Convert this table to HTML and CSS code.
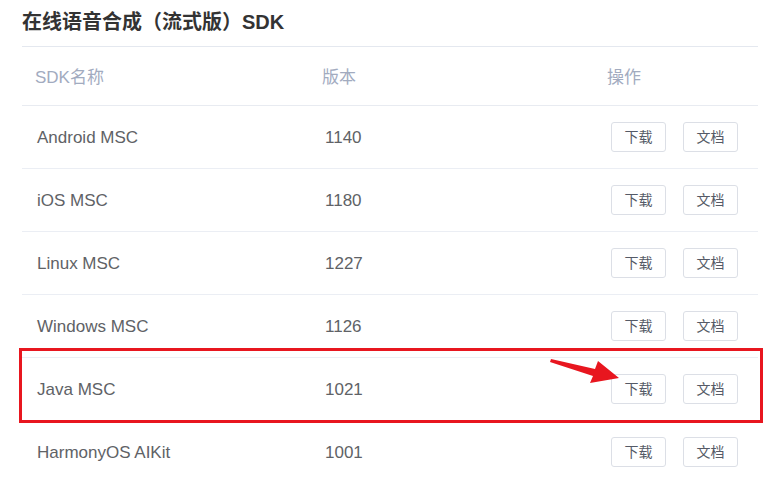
FILE: index.html
```html
<!DOCTYPE html>
<html lang="zh">
<head>
<meta charset="utf-8">
<title>在线语音合成（流式版）SDK</title>
<link rel="stylesheet" href="styles.css">
</head>
<body>
<div class="page">
  <h2 class="title">在线语音合成（流式版）SDK</h2>
  <div class="table">
    <div class="row head">
      <div class="cell c1">SDK名称</div>
      <div class="cell c2">版本</div>
      <div class="cell c3">操作</div>
    </div>
    <div class="row">
      <div class="cell c1">Android MSC</div>
      <div class="cell c2">1140</div>
      <div class="cell c3"><span class="btn">下载</span><span class="btn">文档</span></div>
    </div>
    <div class="row">
      <div class="cell c1">iOS MSC</div>
      <div class="cell c2">1180</div>
      <div class="cell c3"><span class="btn">下载</span><span class="btn">文档</span></div>
    </div>
    <div class="row">
      <div class="cell c1">Linux MSC</div>
      <div class="cell c2">1227</div>
      <div class="cell c3"><span class="btn">下载</span><span class="btn">文档</span></div>
    </div>
    <div class="row">
      <div class="cell c1">Windows MSC</div>
      <div class="cell c2">1126</div>
      <div class="cell c3"><span class="btn">下载</span><span class="btn">文档</span></div>
    </div>
    <div class="row">
      <div class="cell c1">Java MSC</div>
      <div class="cell c2">1021</div>
      <div class="cell c3"><span class="btn">下载</span><span class="btn">文档</span></div>
    </div>
    <div class="row">
      <div class="cell c1">HarmonyOS AIKit</div>
      <div class="cell c2">1001</div>
      <div class="cell c3"><span class="btn">下载</span><span class="btn">文档</span></div>
    </div>
  </div>
  <div class="highlight"></div>
  <svg class="arrow" width="80" height="30" viewBox="0 0 80 30">
    <polygon points="1,2 45,12 48,4 69,21 40,26 43,19 0,5" fill="#e8161f"/>
  </svg>
</div>
</body>
</html>
```
FILE: styles.css
```css
html, body {
  margin: 0;
  padding: 0;
  background: #ffffff;
}
body {
  font-family: "Liberation Sans", "Noto Sans CJK SC", sans-serif;
  color: #606266;
}
.page {
  position: relative;
  width: 774px;
  height: 480px;
  overflow: hidden;
}
.title {
  margin: 0 16px 0 22px;
  padding: 8px 0 9px;
  font-size: 20px;
  line-height: 29px;
  font-weight: bold;
  color: #333333;
  border-bottom: 1px solid #e4e8ef;
}
.table {
  margin: 0 16px 0 22px;
}
.row {
  display: grid;
  grid-template-columns: 287px 285px 1fr;
  height: 62px;
  border-bottom: 1px solid #ebeef4;
  align-items: center;
  font-size: 17px;
}
.row.head {
  height: 58px;
  color: #a2abbf;
  border-bottom-color: #e8ebf1;
}
.cell {
  padding-left: 15px;
  white-space: nowrap;
}
.row .c1 {
  padding-top: 2px;
}
.row.head .cell {
  padding-left: 13px;
  padding-top: 0;
  padding-bottom: 2px;
}
.row .c2 {
  padding-left: 16px;
  padding-top: 2px;
}
.row .c3 {
  padding-left: 17px;
  display: flex;
  gap: 17px;
}
.row.head .c3 {
  padding-left: 13px;
  display: block;
}
.btn {
  box-sizing: border-box;
  width: 55px;
  height: 30px;
  border: 1px solid #dcdfe6;
  border-radius: 3px;
  font-size: 14px;
  line-height: 28px;
  text-align: center;
  color: #555a66;
}
.highlight {
  position: absolute;
  left: 19px;
  top: 348px;
  width: 744px;
  height: 75px;
  box-sizing: border-box;
  border: 3px solid #e8161f;
}
.arrow {
  position: absolute;
  left: 550px;
  top: 357px;
}
```
